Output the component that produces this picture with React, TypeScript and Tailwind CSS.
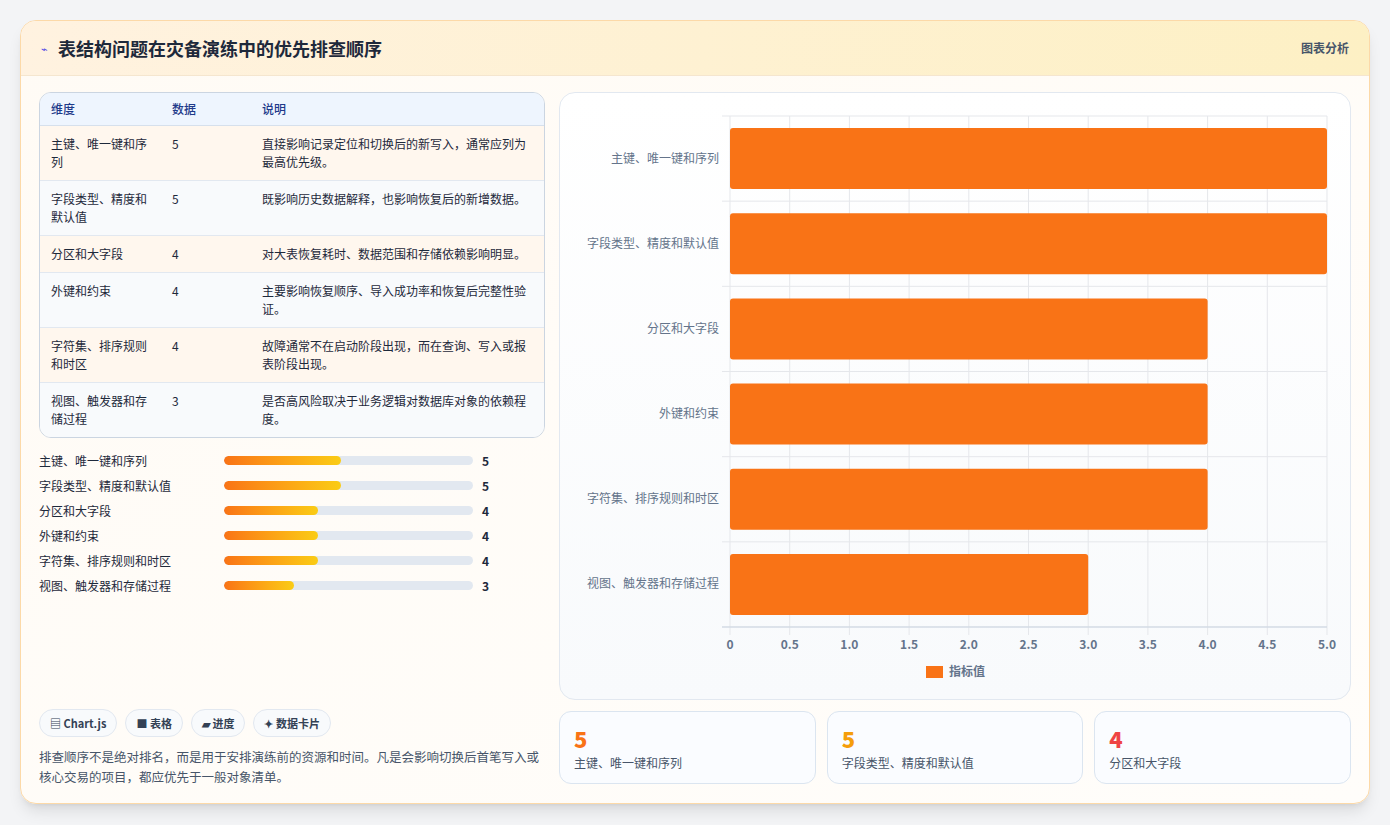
import React from "react";

const rows = [
  ["主键、唯一键和序列", 5, "直接影响记录定位和切换后的新写入，通常应列为最高优先级。"],
  ["字段类型、精度和默认值", 5, "既影响历史数据解释，也影响恢复后的新增数据。"],
  ["分区和大字段", 4, "对大表恢复耗时、数据范围和存储依赖影响明显。"],
  ["外键和约束", 4, "主要影响恢复顺序、导入成功率和恢复后完整性验证。"],
  ["字符集、排序规则和时区", 4, "故障通常不在启动阶段出现，而在查询、写入或报表阶段出现。"],
  ["视图、触发器和存储过程", 3, "是否高风险取决于业务逻辑对数据库对象的依赖程度。"],
] as const;
const tableNames = ["主键、唯一键和序\n列", "字段类型、精度和\n默认值", "分区和大字段", "外键和约束", "字符集、排序规则\n和时区", "视图、触发器和存\n储过程"];

function Chart() {
  const x0 = 170, x1 = 767, y0 = 23, y1 = 534;
  const band = (y1 - y0) / 6;
  const sx = (v: number) => x0 + ((x1 - x0) * v) / 5;
  const ticks = [0, 0.5, 1, 1.5, 2, 2.5, 3, 3.5, 4, 4.5, 5];
  return (
    <svg width="791" height="606" viewBox="0 0 791 606" className="block">
      {ticks.map((t) => (
        <line key={t} x1={sx(t)} x2={sx(t)} y1={y0} y2={y1 + 8} stroke="#e5e7eb" strokeWidth="1" />
      ))}
      {[0, 1, 2, 3, 4, 5, 6].map((i) => (
        <line key={i} x1={x0 - 8} x2={x1} y1={y0 + band * i} y2={y0 + band * i} stroke="#e5e7eb" />
      ))}
      <line x1={x0 - 8} x2={x1} y1={y1} y2={y1} stroke="#cbd5e1" />
      {rows.map((r, i) => {
        const cy = y0 + band * i + band / 2;
        return (
          <g key={i}>
            <rect x={x0} y={cy - 30.5} width={sx(r[1]) - x0} height={61} rx={3} fill="#f97316" />
            <text x={159} y={cy + 4} textAnchor="end" fontSize="12" fill="#64748b">{r[0]}</text>
          </g>
        );
      })}
      {ticks.map((t) => (
        <text key={t} x={sx(t)} y={556} textAnchor="middle" fontSize="12" fontWeight="600" fill="#64748b">
          {t === 0 ? "0" : t.toFixed(1)}
        </text>
      ))}
      <rect x={366} y={573} width={17} height={12} fill="#f97316" />
      <text x={389} y={583} fontSize="12" fontWeight="600" fill="#64748b">指标值</text>
    </svg>
  );
}

export default function App() {
  return (
    <div className="min-h-[825px] bg-[#f3f4f6] p-5 pb-0" style={{ fontFamily: '"Noto Sans CJK SC", "Noto Sans", sans-serif' }}>
      <div className="w-[1350px] h-[784px] rounded-2xl border border-[#fcd9a8] bg-gradient-to-br from-[#fffbf5] to-[#fffdfa] shadow-lg overflow-hidden flex flex-col">
        <div className="h-[55px] shrink-0 flex items-center justify-between px-5 bg-gradient-to-r from-[#fff2e0] to-[#fdf0c4] border-b border-[#f5e6cf]">
          <div className="flex items-center gap-2.5">
            <span className="text-[#4f46e5] text-[11px]">⌁</span>
            <span className="text-[18px] font-bold text-[#1e293b]">表结构问题在灾备演练中的优先排查顺序</span>
          </div>
          <span className="text-[12px] font-semibold text-[#475569]">图表分析</span>
        </div>
        <div className="flex gap-[14px] px-[18px] pt-4 flex-1">
          <div className="w-[507px] flex flex-col">
            <div className="rounded-xl border border-[#cbd5e1] overflow-hidden text-[12px]">
              <div className="flex h-[33px] items-center bg-[#eef5fe] border-b border-[#d6e0ec] text-[#1e3a8a] font-medium">
                <div className="w-[121px] pl-[11px]">维度</div>
                <div className="w-[90px] pl-[11px]">数据</div>
                <div className="flex-1 pl-[11px]">说明</div>
              </div>
              {rows.map((r, i) => (
                <div key={i} className={`flex py-[9px] leading-[18px] text-[#1e293b] ${i % 2 === 0 ? "bg-[#fff7ee]" : "bg-[#f8fafc]"} ${i < 5 ? "border-b border-[#e2e8f0]" : ""}`}>
                  <div className="w-[121px] pl-[11px] pr-2 whitespace-pre-line">{tableNames[i]}</div>
                  <div className="w-[90px] pl-[11px]">{r[1]}</div>
                  <div className="flex-1 pl-[11px] pr-[14px]">{r[2]}</div>
                </div>
              ))}
            </div>
            <div className="mt-[10px] flex flex-col">
              {rows.map((r, i) => (
                <div key={i} className="flex items-center h-[25px] text-[12px]">
                  <div className="w-[185px] text-[#1e293b]">{r[0]}</div>
                  <div className="w-[249px] h-[9px] rounded-full bg-[#e2e8f0] overflow-hidden">
                    <div className="h-full rounded-full bg-gradient-to-r from-[#f97316] to-[#facc15]" style={{ width: `${(r[1] / 5) * 47}%` }} />
                  </div>
                  <div className="ml-[9px] font-bold text-[#1e293b]">{r[1]}</div>
                </div>
              ))}
            </div>
            <div className="flex-1" />
            <div className="flex gap-2 text-[11px] font-semibold text-[#334155]">
              <span className="rounded-full border border-[#e2e8f0] bg-[#f8fafc] px-[10px] h-[28px] flex items-center">▤ Chart.js</span>
              <span className="rounded-full border border-[#e2e8f0] bg-[#f8fafc] px-[10px] h-[28px] flex items-center">■ 表格</span>
              <span className="rounded-full border border-[#e2e8f0] bg-[#f8fafc] px-[10px] h-[28px] flex items-center">▰ 进度</span>
              <span className="rounded-full border border-[#e2e8f0] bg-[#f8fafc] px-[10px] h-[28px] flex items-center">✦ 数据卡片</span>
            </div>
            <p className="mt-[10px] mb-[16px] text-[12.5px] leading-[20px] text-[#475569]">
              排查顺序不是绝对排名，而是用于安排演练前的资源和时间。凡是会影响切换后首笔写入或核心交易的项目，都应优先于一般对象清单。
            </p>
          </div>
          <div className="w-[792px] flex flex-col">
            <div className="h-[608px] rounded-2xl border border-[#e2e8f0] bg-gradient-to-b from-white to-[#f8fafc] overflow-hidden">
              <Chart />
            </div>
            <div className="mt-[11px] grid grid-cols-3 gap-[11px]">
              {[["5", "text-[#f97316]", "主键、唯一键和序列"], ["5", "text-[#f59e0b]", "字段类型、精度和默认值"], ["4", "text-[#ef4444]", "分区和大字段"]].map((c, i) => (
                <div key={i} className="h-[73px] rounded-xl border border-[#dbe5f0] bg-[#fafcff] px-[14px] pt-[12px]">
                  <div className={`text-[22px] leading-[28px] font-extrabold ${c[1]}`}>{c[0]}</div>
                  <div className="text-[12px] text-[#475569] mt-[2px]">{c[2]}</div>
                </div>
              ))}
            </div>
          </div>
        </div>
      </div>
    </div>
  );
}
